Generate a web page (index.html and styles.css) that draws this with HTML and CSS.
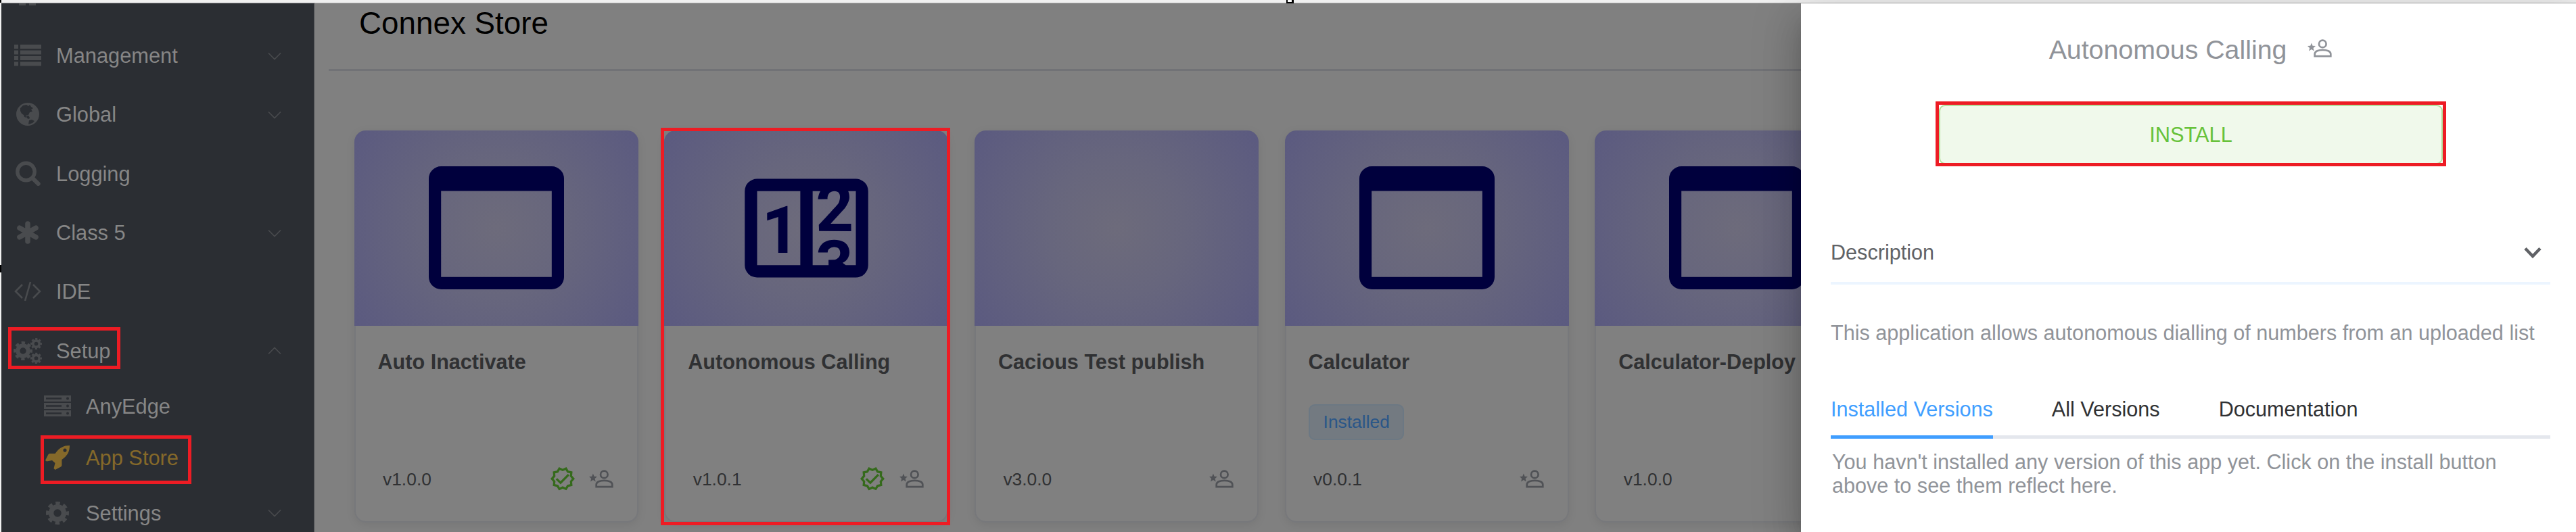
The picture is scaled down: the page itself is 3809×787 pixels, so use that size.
FILE: index.html
```html
<!DOCTYPE html>
<html lang="en">
<head>
<meta charset="utf-8">
<title>Connex Store</title>
<link rel="stylesheet" href="styles.css">
</head>
<body>
<svg class="defs" width="0" height="0">
  <symbol id="gear" viewBox="0 0 34 34">
    <circle cx="17" cy="17" r="9.4" fill="none" stroke="currentColor" stroke-width="7.4"/>
    <circle cx="17" cy="17" r="14.5" fill="none" stroke="currentColor" stroke-width="5" stroke-dasharray="6.4 4.99" stroke-dashoffset="3.2"/>
  </symbol>
  <symbol id="chev" viewBox="0 0 20 12"><path d="M1 1.5l9 9 9-9" fill="none" stroke="currentColor" stroke-width="1.6"/></symbol>
  <symbol id="window" viewBox="0 0 22 20"><path fill-rule="evenodd" d="M2 0h18a2 2 0 0 1 2 2v16a2 2 0 0 1-2 2H2a2 2 0 0 1-2-2V2a2 2 0 0 1 2-2zM2 4v14h18V4z" fill="currentColor"/></symbol>
  <symbol id="counter" viewBox="0 0 24 24"><path fill="currentColor" d="M4,4H20A2,2 0 0,1 22,6V18A2,2 0 0,1 20,20H4A2,2 0 0,1 2,18V6A2,2 0 0,1 4,4M4,6V18H11V6H4M20,18V6H18.76C19,6.54 18.95,7.07 18.95,7.13C18.88,7.8 18.41,8.5 18.24,8.75L15.91,11.3L19.23,11.28L19.24,12.5L14.04,12.47L14,11.47C14,11.47 17.05,8.24 17.2,7.95C17.34,7.67 17.91,6 16.5,6C15.27,6.05 15.41,7.3 15.41,7.3L13.87,7.31C13.87,7.31 13.88,6.65 14.25,6H13V18H15.58L15.57,17.14L16.54,17.13C16.54,17.13 17.45,16.97 17.46,16.08C17.5,15.08 16.65,15.08 16.5,15.08C16.37,15.08 15.43,15.13 15.43,15.95H13.91C13.91,15.95 13.95,13.89 16.5,13.89C19.1,13.89 18.96,15.91 18.96,15.91C18.96,15.91 19,17.16 17.85,17.63L18.37,18H20M8.92,16H7.42V10.2L5.62,10.76V9.53L8.76,8.41H8.92V16Z"/></symbol>
  <symbol id="verified" viewBox="1 1.5 22 21"><path fill="currentColor" d="M23 12l-2.44-2.79.34-3.69-3.61-.82-1.89-3.2L12 2.96 8.6 1.5 6.71 4.69 3.1 5.5l.34 3.7L1 12l2.44 2.79-.34 3.7 3.61.82L8.6 22.5l3.4-1.47 3.4 1.46 1.89-3.19 3.61-.82-.34-3.69L23 12zm-4.51 2.11l.26 2.79-2.74.62-1.43 2.41L12 18.82l-2.58 1.11-1.43-2.41-2.74-.62.26-2.8L3.66 12l1.85-2.12-.26-2.78 2.74-.61 1.43-2.41L12 5.18l2.58-1.11 1.43 2.41 2.74.62-.26 2.79L20.34 12l-1.85 2.11z"/><path d="M6.4 12.1l3.7 3.6 7.3-7.4" fill="none" stroke="currentColor" stroke-width="2"/></symbol>
  <symbol id="person" viewBox="0 0 36 27"><path fill="currentColor" d="M5.9 5.6l1.7 4.2 4.4.3-3.4 2.9 1.1 4.4-3.8-2.4-3.8 2.4 1.1-4.4L0 10.1l4.2-.3z"/><circle cx="22.3" cy="6.9" r="5.3" fill="none" stroke="currentColor" stroke-width="2.7"/><path d="M10.7 25.2v-3.4c0-8 23.6-8 23.6 0v3.4z" fill="none" stroke="currentColor" stroke-width="2.7"/></symbol>
</svg>

<div class="app">
  <div class="topstrip"></div>
  <nav class="sidebar">
    <div class="cut"><i></i><i></i></div>
    <div class="row"><span class="ico"><svg width="40" height="32"><path fill="currentColor" d="M0 0h6v6H0zM9 0h31v6H9zM0 8.5h6v6H0zM9 8.5h31v6H9zM0 17h6v6H0zM9 17h31v6H9zM0 25.5h6v6H0zM9 25.5h31v6H9z"/></svg></span><span class="lbl">Management</span><svg class="chev"><use href="#chev"/></svg></div>
    <div class="row"><span class="ico"><svg width="34" height="34"><circle cx="17" cy="17" r="17" fill="currentColor"/><path fill="#2b2e33" d="M6 8L10 4l5-1 3 2 2-2 2 3 3 2-3 2 2 3-4 1-2 4-4 1 1 3-3-1-1-3-3-2-2-4zM19 26l4-1 4 2-3 3-6 2zM15 20l3-1 2 3-1 2-3-1z"/></svg></span><span class="lbl">Global</span><svg class="chev"><use href="#chev"/></svg></div>
    <div class="row"><span class="ico"><svg width="37" height="37"><circle cx="15.5" cy="16" r="12.7" fill="none" stroke="currentColor" stroke-width="5.4"/><path d="M25 25.5l8.7 8.5" stroke="currentColor" stroke-width="6" stroke-linecap="round"/></svg></span><span class="lbl">Logging</span></div>
    <div class="row"><span class="ico"><svg width="34" height="34"><path d="M17 4v26M5 10.2l24 13.6M29 10.2L5 23.8" stroke="currentColor" stroke-width="7.6" stroke-linecap="round"/></svg></span><span class="lbl">Class 5</span><svg class="chev"><use href="#chev"/></svg></div>
    <div class="row"><span class="ico"><svg width="40" height="30"><path d="M12 5L2 15l10 10M28 5l10 10-10 10M24 1l-8 28" fill="none" stroke="currentColor" stroke-width="2.6"/></svg></span><span class="lbl">IDE</span></div>
    <div class="row"><span class="ico"><svg width="42" height="38"><use href="#gear" x="0" y="5" width="28" height="28"/><use href="#gear" x="25" y="0" width="17" height="17"/><use href="#gear" x="25" y="21.5" width="17" height="17"/></svg></span><span class="lbl">Setup</span><svg class="chev up"><use href="#chev"/></svg></div>
    <div class="row sub"><span class="ico"><svg width="40" height="32"><path fill="currentColor" d="M0 0h40v9H0zM0 11h40v9H0zM0 22h40v9H0z"/><g fill="#2b2e33"><path d="M3 3.2h23v2.6H3zM3 14.2h23v2.6H3zM3 25.2h23v2.6H3z"/><circle cx="35" cy="4.5" r="2"/><circle cx="35" cy="15.5" r="2"/><circle cx="35" cy="26.5" r="2"/></g></svg></span><span class="lbl">AnyEdge</span></div>
    <div class="row sub active"><span class="ico"><svg width="36" height="36"><path fill="currentColor" fill-rule="evenodd" d="M36 0C27 0 21 3 14.500 12H6.500Q5 12 4.300 13.500L0 22l2 1.600 8-1.600 4.500 4-2 8 2 2L23 31.500q1.400-1 1.400-2.500v-8C33 15 36 9 36 0zM29 4.500a2.600 2.600 0 1 0 .01 0z"/></svg></span><span class="lbl">App Store</span></div>
    <div class="row sub last"><span class="ico"><svg width="34" height="34"><use href="#gear"/></svg></span><span class="lbl">Settings</span><svg class="chev"><use href="#chev"/></svg></div>
  </nav>

  <main class="main">
    <h1>Connex Store</h1>
    <div class="cards">
      <article class="card"><div class="cover"><svg class="win"><use href="#window"/></svg></div><h2>Auto Inactivate</h2><div class="tagrow"></div><footer><span class="ver">v1.0.0</span><svg class="ok"><use href="#verified"/></svg><svg class="per"><use href="#person"/></svg></footer></article>
      <article class="card"><div class="cover"><svg class="cnt"><use href="#counter"/></svg></div><h2>Autonomous Calling</h2><div class="tagrow"></div><footer><span class="ver">v1.0.1</span><svg class="ok"><use href="#verified"/></svg><svg class="per"><use href="#person"/></svg></footer></article>
      <article class="card"><div class="cover"></div><h2>Cacious Test publish</h2><div class="tagrow"></div><footer><span class="ver">v3.0.0</span><svg class="per"><use href="#person"/></svg></footer></article>
      <article class="card"><div class="cover"><svg class="win"><use href="#window"/></svg></div><h2>Calculator</h2><div class="tagrow"><span class="tag">Installed</span></div><footer><span class="ver">v0.0.1</span><svg class="per"><use href="#person"/></svg></footer></article>
      <article class="card"><div class="cover"><svg class="win"><use href="#window"/></svg></div><h2>Calculator-Deploy</h2><div class="tagrow"></div><footer><span class="ver">v1.0.0</span></footer></article>
    </div>
  </main>

  <aside class="drawer">
    <header><span>Autonomous Calling</span><svg class="per"><use href="#person"/></svg></header>
    <button class="install">INSTALL</button>
    <div class="desc"><span>Description</span><svg width="28" height="20"><path d="M3 3.500l11 11.500 11-11.500" fill="none" stroke="currentColor" stroke-width="4.600"/></svg></div>
    <p class="about">This application allows autonomous dialling of numbers from an uploaded list</p>
    <div class="tabs"><span class="on">Installed Versions</span><span>All Versions</span><span>Documentation</span></div>
    <p class="empty">You havn't installed any version of this app yet. Click on the install button<br>above to see them reflect here.</p>
  </aside>

  <div class="mark m-setup"></div>
  <div class="mark m-store"></div>
  <div class="mark m-card"></div>
  <div class="mark m-install"></div>
  <div class="handle h-corner"></div>
  <div class="handle h-left"></div>
  <div class="handle h-top"></div>
</div>
</body>
</html>
```
FILE: styles.css
```css
* { box-sizing: border-box; margin: 0; padding: 0; }
body { font-family: "Liberation Sans", Arial, sans-serif; font-size: 30.8px; background: #f0f0f0; overflow: hidden; }
svg { display: block; flex: none; }
.defs { position: absolute; }
.app { position: relative; width: 3809px; height: 787px; overflow: hidden; display: grid; grid-template: 4px 783px / 465px 1fr; padding-left: 2px; }
.topstrip { grid-column: 1 / 3; background: #f0f0f0; }

.sidebar { width: 463px; background: #2b2e33; border-top: 1px solid #8b8c8e; border-right: 1px solid #4c4e52; color: #494b4e; overflow: hidden; }
.cut { display: flex; gap: 5px; height: 33.1px; padding-left: 26px; }
.cut i { width: 10px; height: 3px; background: #494b4e; }
.row { display: flex; align-items: center; height: 87.4px; padding: 0 48px 0 16px; }
.row .ico { width: 46px; display: flex; justify-content: center; }
.row .lbl { margin-left: 19px; padding-top: 2px; color: #868686; flex: 1; line-height: 40px; }
.row .chev { width: 20px; height: 12px; margin-top: 2px; }
.row .chev.up { transform: scaleY(-1); margin-top: 0; }
.row.sub { height: 76px; padding-left: 60px; }
.row.sub .lbl { padding-top: 3px; }
.row.sub .ico svg { margin-top: 1px; }
.row.sub.last { height: 87.4px; }
.row.active, .row.active .lbl { color: #85692a; }

.main { margin-left: -2px; background: #808080; border-top: 1px solid #a8a8a8; display: flex; flex-direction: column; padding-left: 21px; }
h1 { font-weight: 400; font-size: 45.8px; line-height: 60px; color: #000; padding-left: 45px; height: 99.5px; border-bottom: 3px solid #717276; }
.cards { display: flex; gap: 38.7px; margin-top: 88px; padding-left: 37.5px; }
.card { width: 420px; height: 580px; flex: none; border-radius: 17px; background: #808080; box-shadow: inset 0 0 0 2px #77787b, 0 3px 14px rgba(0,0,0,.08); display: flex; flex-direction: column; overflow: hidden; }
.cover { height: 289px; flex: none; background: radial-gradient(circle, #6d6b7b 0, #67667d 40%, #5b5a80 100%); display: flex; align-items: center; justify-content: center; color: #00003d; }
.win { width: 200px; height: 182px; }
.cnt { width: 219px; height: 219px; }
h2 { font-size: 30.6px; line-height: 40px; margin: 33px 0 0 35px; color: #303133; white-space: nowrap; }
.tagrow { height: 53px; margin: 43px 0 0 35px; }
.tag { display: inline-flex; align-items: center; width: 141px; height: 53px; border: 2px solid #6c7883; border-radius: 9px; background: #737a81; color: #2a5688; font-size: 26.4px; padding-left: 20px; }
footer { display: flex; align-items: center; height: 36px; margin: 40px 36.5px 0 42.5px; color: #505256; }
.ver { flex: 1; font-size: 26.4px; color: #303133; padding-top: 2px; }
.ok { width: 36px; height: 34.4px; color: #356a1c; margin-right: 21.5px; }
.per { width: 36px; height: 27px; }

.drawer { position: absolute; left: 2663px; top: 5px; width: 1146px; height: 782px; background: #fff; padding: 0 38px 0 44px; color: #909399; font-size: 30.6px; box-shadow: 0 18px 22px -11px rgba(0,0,0,.2), 0 35px 53px 4px rgba(0,0,0,.14), 0 13px 66px 11px rgba(0,0,0,.12); }
.drawer header { display: flex; justify-content: center; align-items: center; font-size: 39.3px; line-height: 46px; gap: 31px; padding-top: 45px; height: 90px; }
.drawer header .per { margin-top: -2px; }
.install { display: block; margin: 60px 0 0 160px; width: 745px; height: 88px; padding-top: 1px; border: 2px solid #b3e19d; border-radius: 9px; background: #f0f9eb; color: #67c23a; font: inherit; font-size: 30.8px; }
.desc { display: flex; justify-content: space-between; align-items: center; margin-top: 84px; height: 94px; padding: 3px 12px 0 0; border-bottom: 4px solid #ecf5ff; color: #606266; }
.about { line-height: 40px; margin-top: 51px; white-space: nowrap; }
.tabs { display: flex; gap: 87px; margin-top: 76px; height: 61px; line-height: 34px; color: #303133; border-bottom: 5px solid #e4e7ed; }
.tabs .on { color: #409eff; height: 61px; border-bottom: 5px solid #409eff; }
.empty { line-height: 35.3px; margin: 17px 0 0 2px; white-space: nowrap; }

.mark { position: absolute; border: 5px solid #ed1c24; }
.m-setup { left: 12px; top: 484px; width: 166px; height: 62px; }
.m-store { left: 60px; top: 644px; width: 223px; height: 72px; }
.m-card { left: 977px; top: 189px; width: 428px; height: 588px; }
.m-install { left: 2862px; top: 150px; width: 755px; height: 96px; }
.handle { position: absolute; background: #000; }
.h-corner { left: 0; top: 0; width: 2px; height: 4px; }
.h-left { left: 0; top: 392px; width: 2px; height: 11px; }
.h-top { left: 1902px; top: 0; width: 11px; height: 5px; background: #fff; border: solid #000; border-width: 0 3px 2px 2px; }
```
